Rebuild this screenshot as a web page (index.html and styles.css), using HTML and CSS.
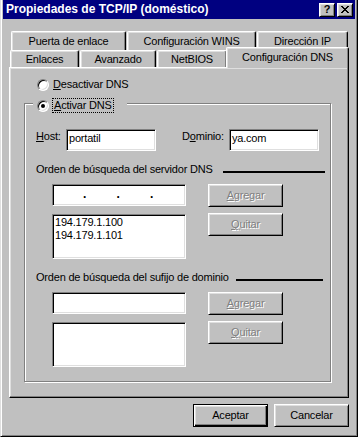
FILE: index.html
```html
<!DOCTYPE html>
<html lang="es">
<head>
<meta charset="utf-8">
<title>Propiedades de TCP/IP</title>
<link rel="stylesheet" href="styles.css">
</head>
<body>
<div class="window">
  <div class="titlebar">
    <span class="title">Propiedades de TCP/IP (doméstico)</span>
    <div class="tbtns">
      <span class="tbtn help">?</span>
      <span class="tbtn close">
        <svg width="8" height="7" viewBox="0 0 8 7" shape-rendering="crispEdges">
          <path fill="#000" d="M0 0h2v1H0zM6 0h2v1H6zM1 1h2v1H1zM5 1h2v1H5zM2 2h4v1H2zM3 3h2v1H3zM2 4h4v1H2zM1 5h2v1H1zM5 5h2v1H5zM0 6h2v1H0zM6 6h2v1H6z"/>
        </svg>
      </span>
    </div>
  </div>
  <div class="content">
    <div class="tabrow back">
      <div class="tab t-puerta">Puerta de enlace</div>
      <div class="tab t-wins">Configuración WINS</div>
      <div class="tab t-ip">Dirección IP</div>
    </div>
    <div class="tabrow front">
      <div class="tab t-enl">Enlaces</div>
      <div class="tab t-av">Avanzado</div>
      <div class="tab t-nb">NetBIOS</div>
      <div class="tab t-dns selected">Configuración DNS</div>
    </div>
    <div class="panel">
      <div class="radio-row">
        <span class="radio"></span>
        <span class="rlabel"><u>D</u>esactivar DNS</span>
      </div>
      <div class="group">
        <div class="legend">
          <span class="radio checked"></span>
          <span class="rlabel focus"><u>A</u>ctivar DNS</span>
        </div>
        <div class="field-row">
          <span class="lbl lbl-host"><u>H</u>ost:</span>
          <div class="edit e-host">portatil</div>
          <span class="lbl lbl-dom">D<u>o</u>minio:</span>
          <div class="edit e-dom">ya.com</div>
        </div>
        <div class="section-title st-dns">
          <span class="st-text">Orden de búsqueda del servidor DNS</span>
          <span class="rule"></span>
        </div>
        <div class="ctl-row">
          <div class="edit ip"><span class="dot">.</span><span class="dot">.</span><span class="dot">.</span></div>
          <div class="btn disabled"><span class="btxt"><u>A</u>gregar</span></div>
        </div>
        <div class="ctl-row list-row">
          <div class="list">194.179.1.100<br>194.179.1.101</div>
          <div class="btn disabled"><span class="btxt"><u>Q</u>uitar</span></div>
        </div>
        <div class="section-title st-suf">
          <span class="st-text">Orden de búsqueda del sufijo de dominio</span>
          <span class="rule"></span>
        </div>
        <div class="ctl-row">
          <div class="edit suf"></div>
          <div class="btn disabled"><span class="btxt"><u>A</u>gregar</span></div>
        </div>
        <div class="ctl-row list-row">
          <div class="list"></div>
          <div class="btn disabled"><span class="btxt"><u>Q</u>uitar</span></div>
        </div>
      </div>
    </div>
    <div class="actions">
      <div class="btn default"><span class="btxt">Aceptar</span></div>
      <div class="btn"><span class="btxt">Cancelar</span></div>
    </div>
  </div>
</div>
</body>
</html>
```

FILE: styles.css
```css
* { box-sizing: border-box; }
html, body { margin: 0; padding: 0; }
body {
  width: 358px;
  height: 437px;
  overflow: hidden;
  background: #c0c0c0;
  font-family: "Liberation Sans", Arial, sans-serif;
  font-size: 11px;
  letter-spacing: -0.2px;
  line-height: 13px;
  color: #000;
}
u { text-decoration: underline; text-underline-offset: 1px; }

.window {
  width: 358px;
  height: 437px;
  background: #c0c0c0;
  border-left: 1px solid #dfdfdf;
  border-right: 1px solid #000;
  border-bottom: 1px solid #000;
  padding: 0 2px 2px 2px;
  box-shadow: inset 1px 0 #fff, inset -1px -1px #808080;
  display: flex;
  flex-direction: column;
}

.titlebar {
  height: 19px;
  background: #000080;
  display: flex;
  align-items: center;
  padding: 0 2px 0 3px;
}
.title {
  color: #fff;
  font-weight: bold;
  font-size: 12px;
  letter-spacing: 0;
  white-space: nowrap;
}
.tbtns { margin-left: auto; display: flex; gap: 2px; }
.tbtn {
  width: 16px;
  height: 14px;
  background: #c0c0c0;
  border: 1px solid;
  border-color: #fff #000 #000 #fff;
  box-shadow: inset 1px 1px #dfdfdf, inset -1px -1px #808080;
  display: flex;
  align-items: center;
  justify-content: center;
  font-weight: bold;
  font-size: 11px;
  letter-spacing: 0;
  line-height: 11px;
}
.tbtn svg { display: block; }

.content {
  flex: 1;
  padding: 12px 6px 0 6px;
  display: flex;
  flex-direction: column;
}

.tabrow { display: flex; gap: 1px; }
.tabrow.back { height: 19px; padding-left: 2px; }
.tabrow.front { height: 20px; margin-top: -3px; padding-left: 1px; align-items: flex-end; }

.tab {
  height: 19px;
  display: flex;
  align-items: center;
  justify-content: center;
  background: #c0c0c0;
  border-left: 1px solid #fff;
  border-top: 1px solid #fff;
  border-right: 1px solid #000;
  border-radius: 2px 2px 0 0;
  box-shadow: inset -1px 0 #808080, inset 1px 1px #dfdfdf;
  white-space: nowrap;
}
.front .tab { height: 17px; }
.t-puerta { width: 115px; }
.t-wins { width: 129px; }
.t-ip { width: 91px; }
.t-enl { width: 69px; }
.t-av { width: 76px; }
.t-nb { width: 70px; }
.t-dns { width: 119px; }
.front .tab.selected {
  width: 123px;
  height: 21px;
  margin: 0 -2px -1px -2px;
  padding-bottom: 2px;
  position: relative;
  z-index: 2;
}

.panel {
  width: 340px;
  height: 331px;
  border: 1px solid;
  border-color: #fff #000 #000 #fff;
  box-shadow: inset -1px -1px #808080, inset 1px 1px #dfdfdf;
  padding: 10px 0 0 14px;
  position: relative;
  z-index: 1;
}

.radio-row {
  display: flex;
  align-items: center;
  height: 13px;
  margin-left: 13px;
  gap: 4px;
}
.radio {
  flex: none;
  width: 12px;
  height: 12px;
  border-radius: 50%;
  background: #fff;
  border: 1px solid;
  border-color: #808080 #fff #fff #808080;
  box-shadow: inset 1px 1px #000, inset -1px -1px #dfdfdf;
  display: flex;
  align-items: center;
  justify-content: center;
}
.radio.checked::after {
  content: "";
  width: 4px;
  height: 4px;
  border-radius: 50%;
  background: #000;
}
.rlabel { white-space: nowrap; }

.group {
  margin-top: 12px;
  width: 307px;
  height: 279px;
  border: 1px solid #808080;
  box-shadow: inset 1px 1px #fff, 1px 1px #fff;
}
.legend {
  margin: -6px 0 0 8px;
  width: 94px;
  height: 15px;
  display: flex;
  align-items: center;
  gap: 3px;
  padding-left: 4px;
  background: #c0c0c0;
}
.rlabel.focus {
  border: 1px dotted #000;
  padding: 0 1px;
  height: 15px;
}

.field-row {
  display: flex;
  align-items: flex-start;
  margin-top: 16px;
  padding-left: 11px;
}
.lbl { margin-top: 1px; white-space: nowrap; }
.lbl-host { width: 30px; }
.lbl-dom { width: 47px; margin-left: 26px; }

.edit {
  height: 22px;
  background: #fff;
  border: 1px solid;
  border-color: #808080 #fff #fff #808080;
  box-shadow: inset 1px 1px #000, inset -1px -1px #dfdfdf;
  padding: 2px 2px 0 2px;
  white-space: nowrap;
}
.e-host, .e-dom { width: 90px; }

.section-title {
  display: flex;
  align-items: flex-start;
  padding: 0 5px 0 11px;
  margin-top: 12px;
}
.st-text { white-space: nowrap; }
.rule {
  flex: 1;
  height: 2px;
  background: #000;
  margin: 8px 0 0 10px;
}
.st-suf .rule { margin-left: 7px; margin-right: 2px; }

.ctl-row {
  display: flex;
  align-items: flex-start;
  gap: 22px;
  padding-left: 27px;
  margin-top: 8px;
}
.ctl-row.list-row { margin-top: 6px; }
.ip, .suf { width: 134px; }
.ip {
  display: flex;
  padding: 3px 0 0 30px;
  font-size: 12px;
  font-weight: bold;
}
.dot { width: 33.5px; }

.list {
  width: 134px;
  height: 45px;
  margin-top: 1px;
  background: #fff;
  border: 1px solid;
  border-color: #808080 #fff #fff #808080;
  box-shadow: inset 1px 1px #000, inset -1px -1px #dfdfdf;
  padding: 1px 2px;
  white-space: nowrap;
}

.btn {
  width: 75px;
  height: 23px;
  flex: none;
  background: #c0c0c0;
  border: 1px solid;
  border-color: #fff #000 #000 #fff;
  box-shadow: inset 1px 1px #dfdfdf, inset -1px -1px #808080;
  display: flex;
  align-items: center;
  justify-content: center;
  white-space: nowrap;
}
.btn.disabled { color: #808080; text-shadow: 1px 1px #fff; }
.btn.default {
  border-color: #000;
  box-shadow: inset 1px 1px #fff, inset -1px -1px #000, inset -2px -2px #808080, inset 2px 2px #dfdfdf;
}

.actions {
  display: flex;
  justify-content: flex-end;
  gap: 6px;
  margin-top: 6px;
}
```
